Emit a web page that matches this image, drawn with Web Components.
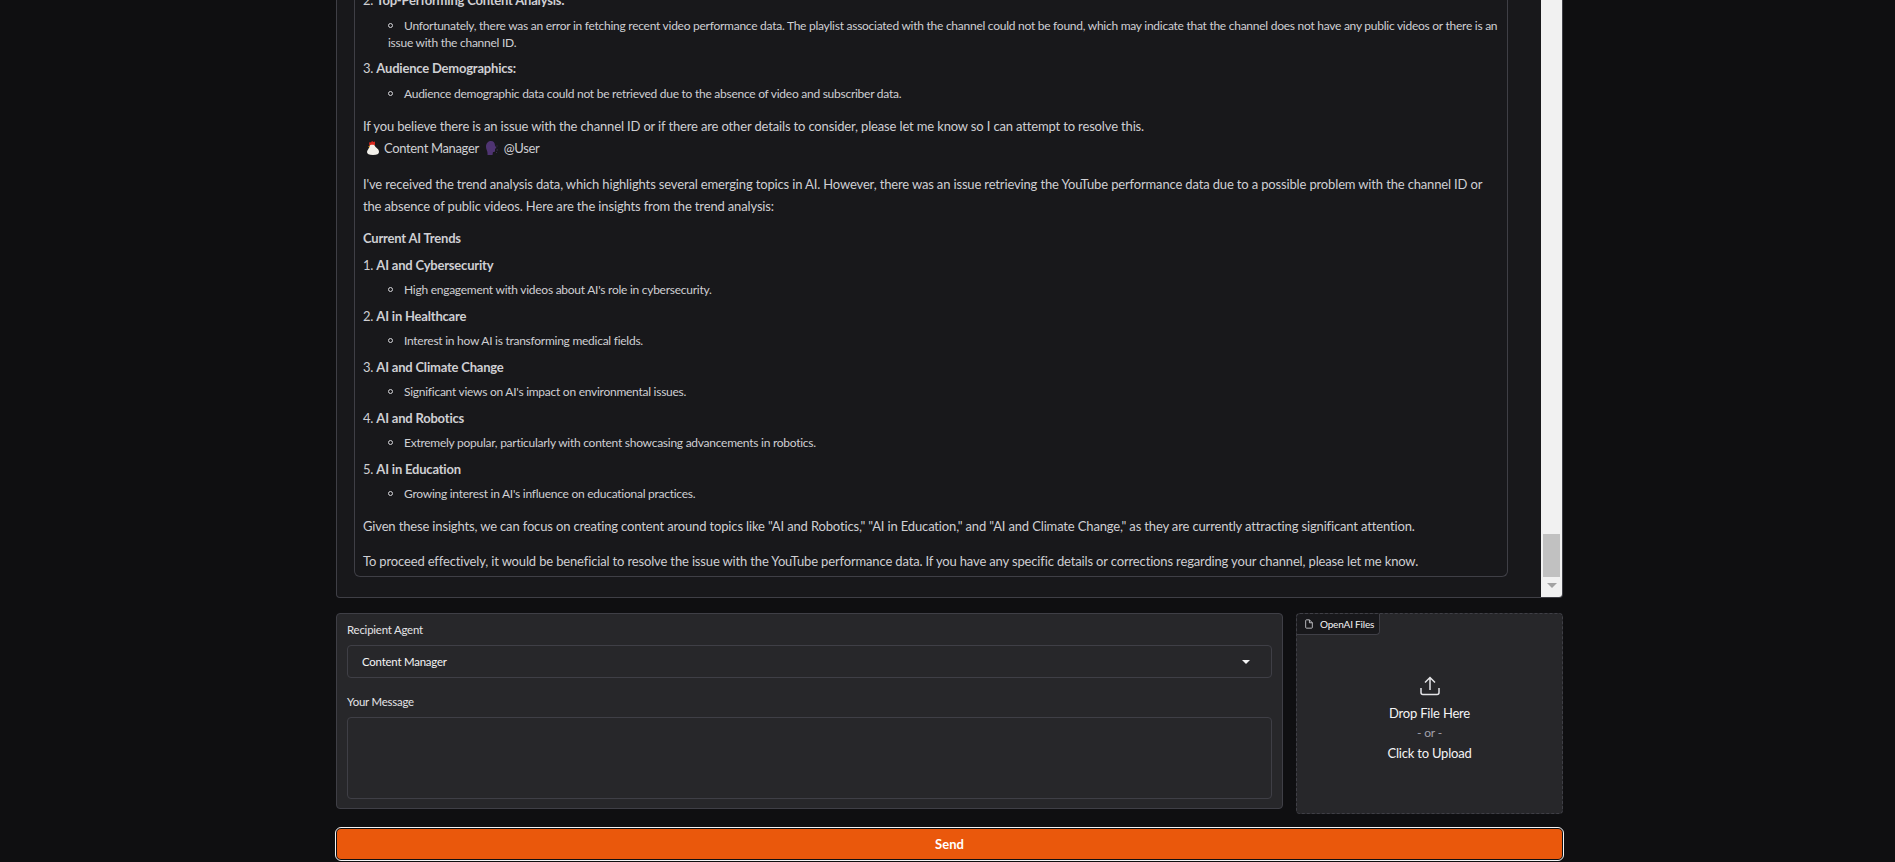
<!DOCTYPE html>
<html>
<head>
<meta charset="utf-8">
<style>
  html, body { margin: 0; height: 862px; overflow: hidden; background: #0f0f11; }
  body { font-family: "Lato", sans-serif; }
</style>
</head>
<body>
<agency-app>
  <chat-log>
    <chat-heading num="2." title="Top-Performing Content Analysis:"></chat-heading>
    <chat-bullet>Unfortunately, there was an error in fetching recent video performance data. The playlist associated with the channel could not be found, which may indicate that the channel does not have any public videos or there is an issue with the channel ID.</chat-bullet>
    <chat-heading num="3." title="Audience Demographics:"></chat-heading>
    <chat-bullet>Audience demographic data could not be retrieved due to the absence of video and subscriber data.</chat-bullet>
    <chat-para>If you believe there is an issue with the channel ID or if there are other details to consider, please let me know so I can attempt to resolve this.</chat-para>
    <chat-sender from="Content Manager" to="@User"></chat-sender>
    <chat-para>I've received the trend analysis data, which highlights several emerging topics in AI. However, there was an issue retrieving the YouTube performance data due to a possible problem with the channel ID or the absence of public videos. Here are the insights from the trend analysis:</chat-para>
    <chat-heading title="Current AI Trends" style="margin-bottom: 5px"></chat-heading>
    <chat-heading num="1." title="AI and Cybersecurity"></chat-heading>
    <chat-bullet>High engagement with videos about AI's role in cybersecurity.</chat-bullet>
    <chat-heading num="2." title="AI in Healthcare"></chat-heading>
    <chat-bullet>Interest in how AI is transforming medical fields.</chat-bullet>
    <chat-heading num="3." title="AI and Climate Change"></chat-heading>
    <chat-bullet>Significant views on AI's impact on environmental issues.</chat-bullet>
    <chat-heading num="4." title="AI and Robotics"></chat-heading>
    <chat-bullet>Extremely popular, particularly with content showcasing advancements in robotics.</chat-bullet>
    <chat-heading num="5." title="AI in Education"></chat-heading>
    <chat-bullet>Growing interest in AI's influence on educational practices.</chat-bullet>
    <chat-para>Given these insights, we can focus on creating content around topics like "AI and Robotics," "AI in Education," and "AI and Climate Change," as they are currently attracting significant attention.</chat-para>
    <chat-para>To proceed effectively, it would be beneficial to resolve the issue with the YouTube performance data. If you have any specific details or corrections regarding your channel, please let me know.</chat-para>
  </chat-log>
  <control-row>
    <message-form></message-form>
    <file-drop label="OpenAI Files"></file-drop>
  </control-row>
  <send-button>Send</send-button>
</agency-app>

<script>
const textFont = `font-family: "Lato", sans-serif;`;

class AgencyApp extends HTMLElement {
  constructor() {
    super();
    this.attachShadow({ mode: 'open' });
  }

  connectedCallback() {
    this.shadowRoot.innerHTML = `
      <style>
        :host {
          display: flex;
          flex-direction: column;
          width: 1228px;
          height: 862px;
          margin-left: 336px;
        }
      </style>
      <slot></slot>
    `;
  }
}

class ControlRow extends HTMLElement {
  constructor() {
    super();
    this.attachShadow({ mode: 'open' });
  }

  connectedCallback() {
    this.shadowRoot.innerHTML = `
      <style>
        :host {
          display: flex;
          gap: 13px;
          margin-top: 15px;
          align-items: flex-start;
        }
      </style>
      <slot></slot>
    `;
  }
}

class ChatLog extends HTMLElement {
  constructor() {
    super();
    this.attachShadow({ mode: 'open' });
  }

  connectedCallback() {
    this.shadowRoot.innerHTML = `
      <style>
        :host {
          display: flex;
          flex: none;
          width: 1227px;
          height: 598px;
          box-sizing: border-box;
          background: #18181b;
          border: 1px solid #3f3f46;
          border-top: 0;
          border-radius: 0 0 4px 4px;
          overflow: hidden;
        }
        .scroll {
          flex: 1;
          display: flex;
          flex-direction: column;
          justify-content: flex-end;
          padding: 0 33px 20px 17px;
          min-width: 0;
        }
        .box {
          border: 1px solid #3f3f46;
          border-top: 0;
          border-radius: 0 0 6px 6px;
          padding: 0 8px 4px 8px;
          color: #cfcfd3;
        }
        .bar {
          width: 21px;
          flex: none;
          background: #f1f1f1;
          display: flex;
          flex-direction: column;
          align-items: center;
          justify-content: flex-end;
          padding-bottom: 9px;
          box-sizing: border-box;
        }
        .thumb { width: 17px; height: 43px; background: #c1c1c1; margin-bottom: 6px; }
        .arrow {
          width: 0; height: 0;
          border-left: 5px solid transparent;
          border-right: 5px solid transparent;
          border-top: 5px solid #a3a3a3;
        }
      </style>
      <div class="scroll"><div class="box"><slot></slot></div></div>
      <div class="bar"><div class="thumb"></div><div class="arrow"></div></div>
    `;
  }
}

class ChatHeading extends HTMLElement {
  constructor() {
    super();
    this.attachShadow({ mode: 'open' });
  }

  connectedCallback() {
    const num = this.getAttribute('num');
    this.shadowRoot.innerHTML = `
      <style>
        :host {
          display: block;
          ${textFont}
          font-size: 13px;
          letter-spacing: -0.2px;
          line-height: 22px;
          margin-bottom: 5.500px;
        }
        b { font-weight: 700; }
      </style>
      ${num ? num + ' ' : ''}<b>${this.getAttribute('title')}</b>
    `;
  }
}

class ChatBullet extends HTMLElement {
  constructor() {
    super();
    this.attachShadow({ mode: 'open' });
  }

  connectedCallback() {
    this.shadowRoot.innerHTML = `
      <style>
        :host {
          display: block;
          ${textFont}
          font-size: 12px;
          letter-spacing: -0.26px;
          line-height: 17px;
          padding-left: 25px;
          margin-bottom: 6.500px;
        }
        .dot {
          display: inline-block;
          width: 5px;
          height: 5px;
          box-sizing: border-box;
          border: 1px solid #d4d4d8;
          border-radius: 50%;
          margin: 0 11px 2px 0;
        }
      </style>
      <span class="dot"></span><slot></slot>
    `;
  }
}

class ChatPara extends HTMLElement {
  constructor() {
    super();
    this.attachShadow({ mode: 'open' });
  }

  connectedCallback() {
    this.shadowRoot.innerHTML = `
      <style>
        :host {
          display: block;
          ${textFont}
          font-size: 13px;
          letter-spacing: -0.15px;
          line-height: 22px;
          margin: 13px 0 10px;
        }
        :host(:last-child) { margin-bottom: 0; }
      </style>
      <slot></slot>
    `;
  }
}

class ChatSender extends HTMLElement {
  constructor() {
    super();
    this.attachShadow({ mode: 'open' });
  }

  connectedCallback() {
    this.shadowRoot.innerHTML = `
      <style>
        :host {
          display: flex;
          align-items: center;
          ${textFont}
          font-size: 13px;
          letter-spacing: -0.35px;
          line-height: 22px;
          margin: -10px 0 14px;
        }
        svg { flex: none; }
        .hen { margin: 0 5px 0 4px; }
        .head { margin: 0 6px 0 7px; }
      </style>
      <svg class="hen" width="12" height="14" viewBox="0 0 12 14">
        <path d="M2 3 L2.500 1 L4 1.500 L5 0 L6.500 1 L8 0.500 L8 4 L3 5 Z" fill="#d8281e"/>
        <path d="M2.500 5 C2.500 3.500 7.500 3 8 5 C8.500 7 12 7.500 12 11 C12 13 10 14 6 14 C2 14 0 13 0 11 C0 9 2 8 2.500 5 Z" fill="#f2f0ea"/>
        <path d="M1 5.500 L3 5 L3 6.800 Z" fill="#e8a020"/>
      </svg>${this.getAttribute('from')}
      <svg class="head" width="12" height="14" viewBox="0 0 12 14">
        <path d="M0 5.500 C0 2 2.500 0 5 0 C7.500 0 9 2 9 4.500 L10.500 7 L9 7.800 L9 10 C9 10.800 8.500 11 7 11 L6.500 14 L1.500 14 C2 10 0 9 0 5.500 Z" fill="#4f3472"/>
        <path d="M10.500 5 h1 M10.500 9 h1.500 M10 11.500 h1" stroke="#3d3050" stroke-width="1"/>
      </svg>${this.getAttribute('to')}
    `;
  }
}

class MessageForm extends HTMLElement {
  constructor() {
    super();
    this.attachShadow({ mode: 'open' });
  }

  connectedCallback() {
    this.shadowRoot.innerHTML = `
      <style>
        :host {
          display: block;
          width: 947px;
          height: 196px;
          box-sizing: border-box;
          flex: none;
          background: #27272a;
          border: 1px solid #3f3f46;
          border-radius: 4px;
          padding: 8px 10px;
          ${textFont}
          font-size: 11.400px;
          letter-spacing: -0.2px;
          color: #e4e4e7;
        }
        .label { line-height: 16px; height: 16px; margin-bottom: 7px; }
        .select {
          height: 33px;
          box-sizing: border-box;
          border: 1px solid #3f3f46;
          border-radius: 4px;
          display: flex;
          align-items: center;
          justify-content: space-between;
          padding: 0 21px 0 14px;
          margin-bottom: 16px;
          color: #f4f4f5;
        }
        .caret {
          width: 0; height: 0;
          border-left: 4px solid transparent;
          border-right: 4px solid transparent;
          border-top: 4px solid #f4f4f5;
        }
        .area {
          height: 82px;
          box-sizing: border-box;
          border: 1px solid #3f3f46;
          border-radius: 4px;
        }
      </style>
      <div class="label">Recipient Agent</div>
      <div class="select"><span>Content Manager</span><span class="caret"></span></div>
      <div class="label">Your Message</div>
      <div class="area"></div>
    `;
  }
}

class FileDrop extends HTMLElement {
  constructor() {
    super();
    this.attachShadow({ mode: 'open' });
  }

  connectedCallback() {
    this.shadowRoot.innerHTML = `
      <style>
        :host {
          display: flex;
          flex-direction: column;
          width: 267px;
          height: 201px;
          flex: none;
          box-sizing: border-box;
          background: #27272a;
          border: 1px dashed #3f3f46;
          border-radius: 4px;
          ${textFont}
          color: #f4f4f5;
        }
        .tab {
          align-self: flex-start;
          display: flex;
          align-items: center;
          gap: 6px;
          height: 21px;
          box-sizing: border-box;
          padding: 0 5px 0 7px;
          background: #18181b;
          border-right: 1px solid #3f3f46;
          border-bottom: 1px solid #3f3f46;
          border-radius: 4px 0 4px 0;
          font-size: 10px;
          letter-spacing: -0.2px;
        }
        .drop {
          flex: 1;
          display: flex;
          flex-direction: column;
          align-items: center;
          padding-top: 41px;
          font-size: 13px;
          letter-spacing: -0.2px;
          line-height: 20px;
        }
        .drop svg { margin-bottom: 7px; }
        .or { color: #a1a1aa; font-size: 12px; }
      </style>
      <div class="tab">
        <svg width="10" height="10" viewBox="0 0 24 24" fill="none" stroke="#d4d4d8" stroke-width="2">
          <path d="M13 2H6a2 2 0 0 0-2 2v16a2 2 0 0 0 2 2h12a2 2 0 0 0 2-2V9z"/>
          <path d="M13 2v7h7"/>
        </svg>
        <span>${this.getAttribute('label')}</span>
      </div>
      <div class="drop">
        <svg width="20" height="20" viewBox="0 0 20 20" fill="none" stroke="#e4e4e7" stroke-width="1.500">
          <path d="M1 12v4.500a2 2 0 0 0 2 2h14a2 2 0 0 0 2-2V12"/>
          <path d="M10 14V1.500M5 6.500l5-5 5 5"/>
        </svg>
        <span>Drop File Here</span>
        <span class="or">- or -</span>
        <span>Click to Upload</span>
      </div>
    `;
  }
}

class SendButton extends HTMLElement {
  constructor() {
    super();
    this.attachShadow({ mode: 'open' });
  }

  connectedCallback() {
    this.shadowRoot.innerHTML = `
      <style>
        :host {
          display: block;
          margin: 15px 0 0 1px;
          width: 1225px;
        }
        button {
          display: block;
          width: 100%;
          height: 30px;
          background: #ea580c;
          color: #fff;
          border: 0;
          border-radius: 4px;
          outline: 1.500px solid #f4f4f5;
          outline-offset: 1px;
          ${textFont}
          font-size: 13px;
          font-weight: 700;
        }
      </style>
      <button><slot></slot></button>
    `;
  }
}

customElements.define('agency-app', AgencyApp);
customElements.define('control-row', ControlRow);
customElements.define('chat-log', ChatLog);
customElements.define('chat-heading', ChatHeading);
customElements.define('chat-bullet', ChatBullet);
customElements.define('chat-para', ChatPara);
customElements.define('chat-sender', ChatSender);
customElements.define('message-form', MessageForm);
customElements.define('file-drop', FileDrop);
customElements.define('send-button', SendButton);
</script>
</body>
</html>
